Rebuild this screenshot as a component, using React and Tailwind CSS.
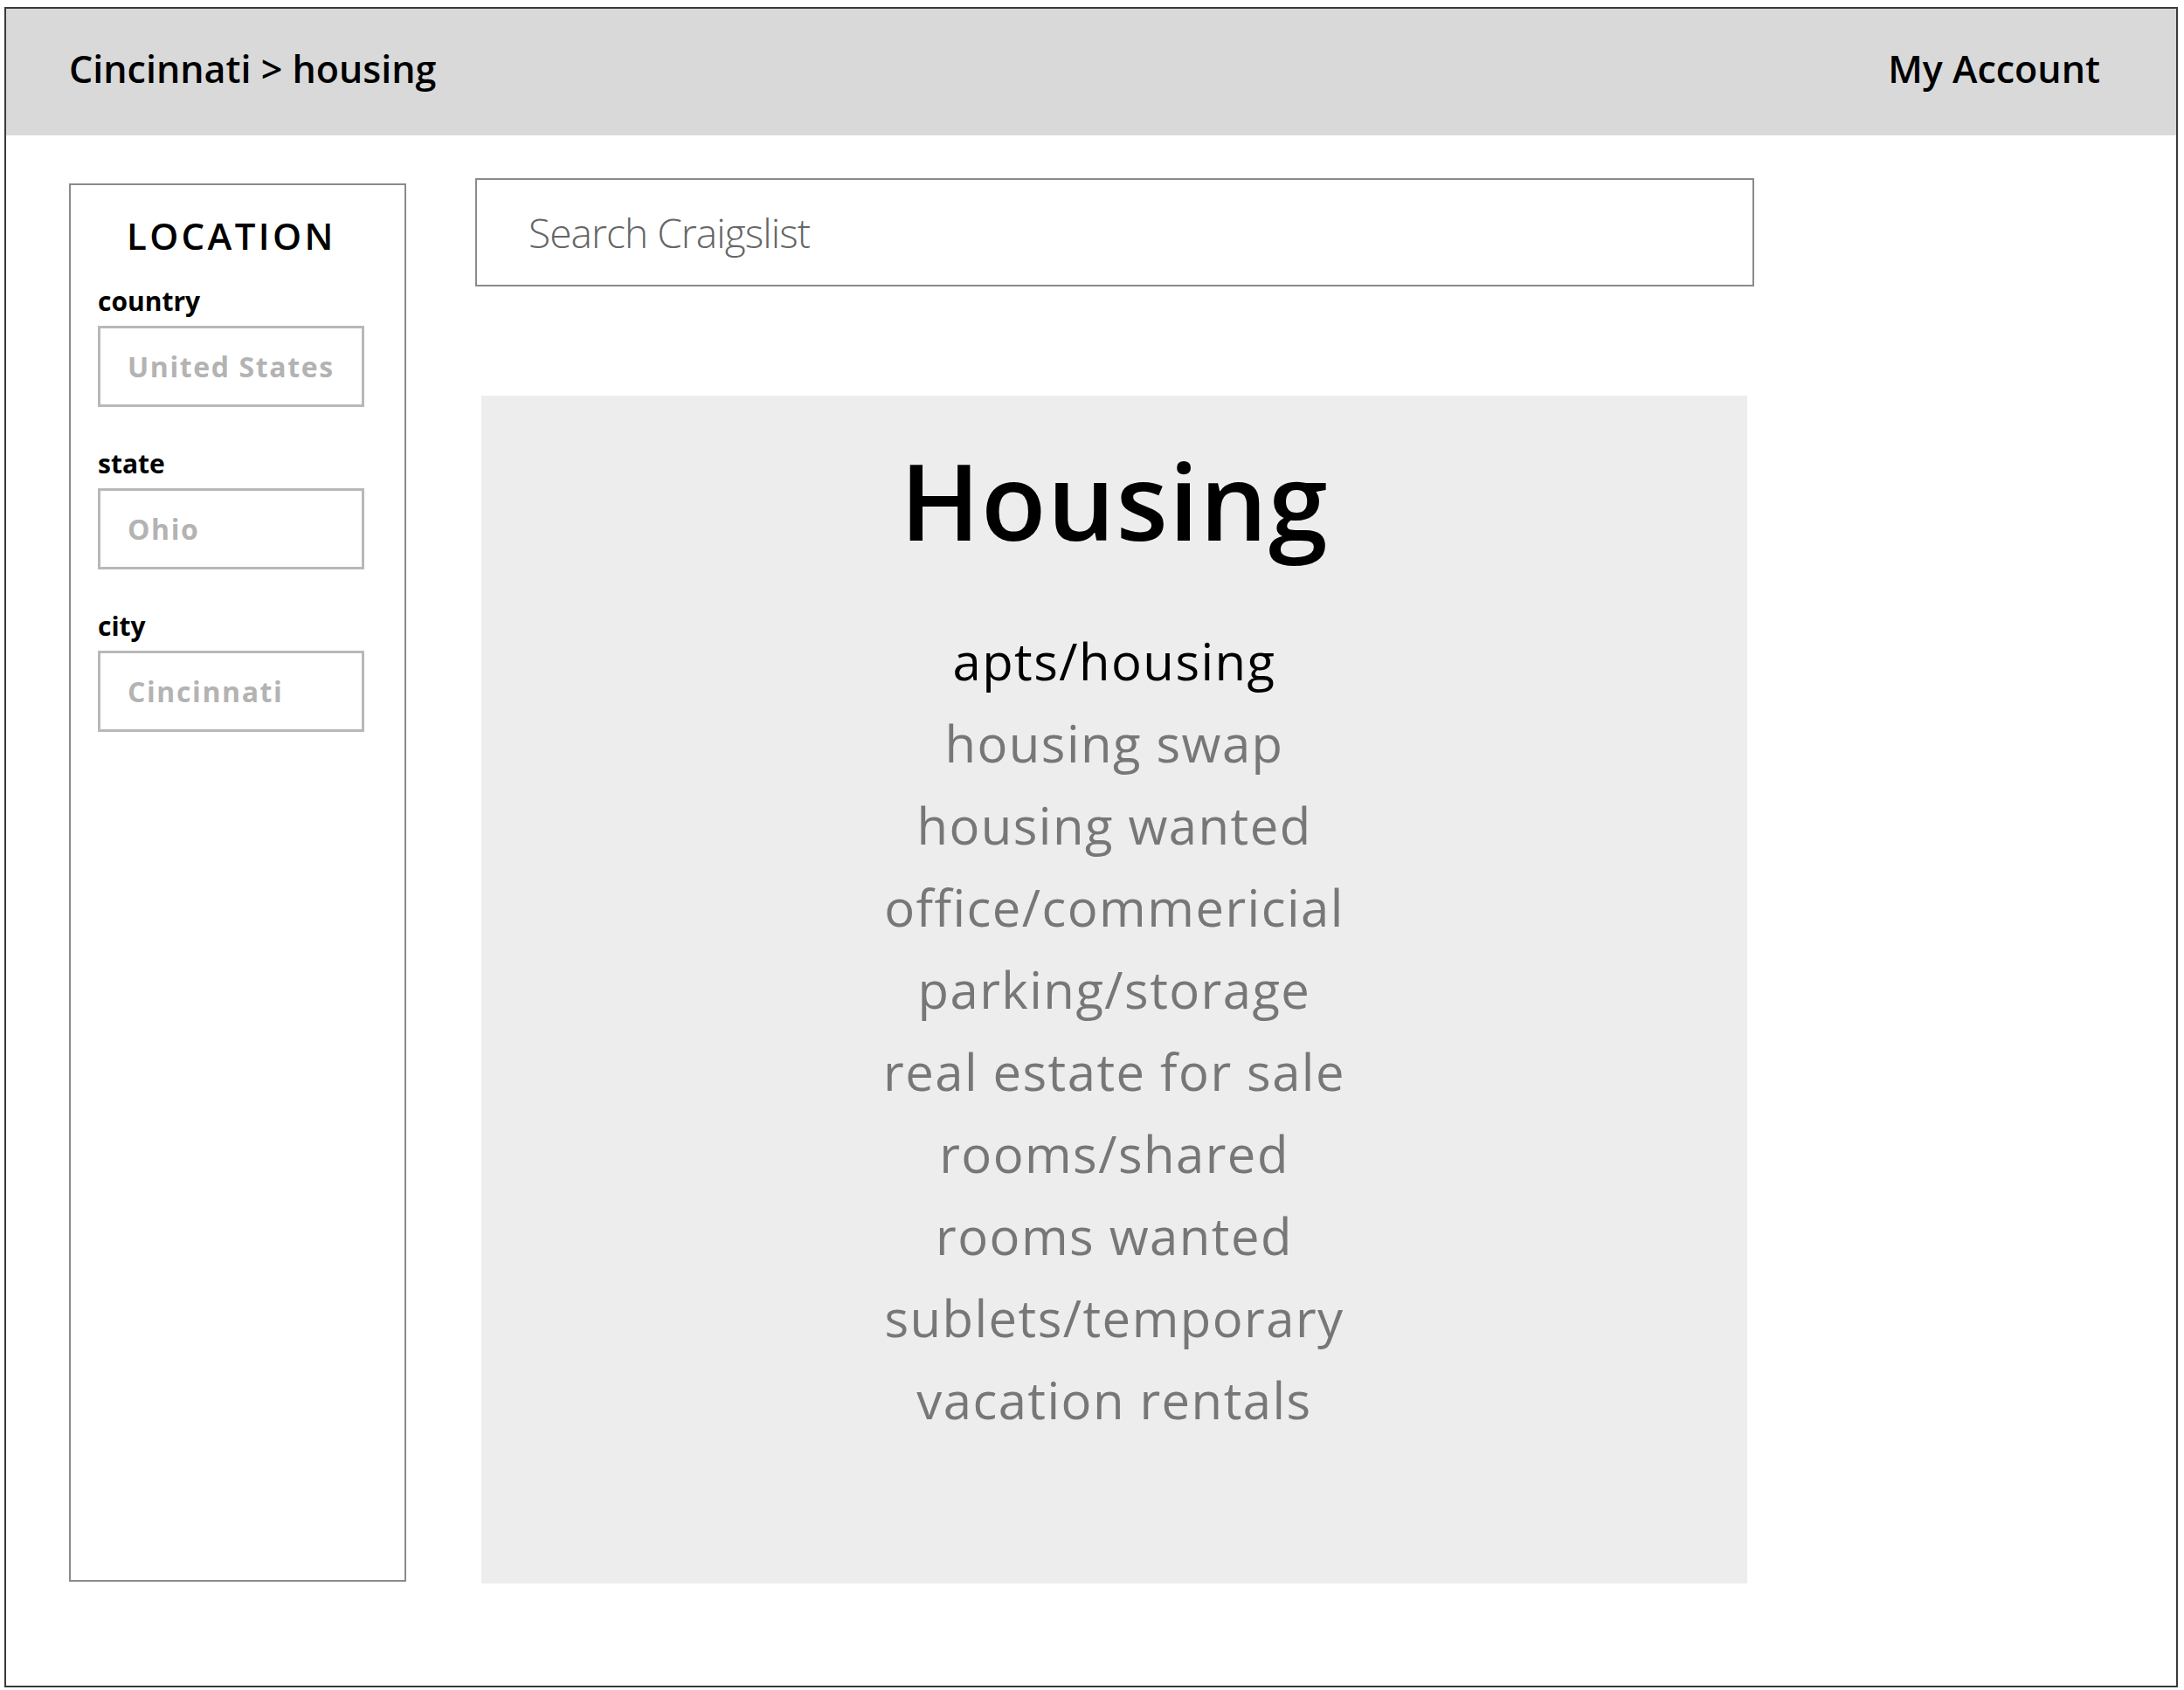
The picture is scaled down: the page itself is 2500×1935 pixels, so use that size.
import React from "react";

const font = { fontFamily: '"Open Sans", "Noto Sans", sans-serif' };

const listings = [
  "housing swap",
  "housing wanted",
  "office/commericial",
  "parking/storage",
  "real estate for sale",
  "rooms/shared",
  "rooms wanted",
  "sublets/temporary",
  "vacation rentals",
];

const Field = ({ label, value }) => {
  return (
    <div className="flex flex-col">
      <span className="text-[30px] leading-[36px] font-bold text-black">{label}</span>
      <div className="mt-[10px] w-[305px] h-[93px] border-[3px] border-[#b8b8b8] flex items-center pl-[31px]">
        <span className="text-[32px] font-bold tracking-[0.05em] text-[#b3b3b3]">{value}</span>
      </div>
    </div>
  );
};

const App = () => {
  return (
    <div className="w-[2500px] h-[1935px] bg-white pt-[8px] pl-[5px] pr-[7px] pb-[3px]" style={font}>
      <div className="w-full h-full border-2 border-[#3a3a3a] flex flex-col">
        <div className="h-[145px] bg-[#d9d9d9] flex items-center justify-between pl-[72px] pr-[87px] pb-[6px]">
          <span className="text-[43px] font-semibold text-black">Cincinnati &gt; housing</span>
          <span className="text-[43px] font-semibold text-black">My Account</span>
        </div>

        <div className="flex pl-[72px] pt-[49px]">
          <aside className="mt-[6px] w-[386px] h-[1601px] border-2 border-[#8a8a8a] pt-[34px] pl-[31px]">
            <h2 className="text-[42px] leading-[48px] font-semibold tracking-[0.08em] text-black pl-[33px]">LOCATION</h2>
            <div className="mt-[33px] flex flex-col gap-[47px]">
              <Field label="country" value="United States" />
              <Field label="state" value="Ohio" />
              <Field label="city" value="Cincinnati" />
            </div>
          </aside>

          <main className="ml-[79px] flex flex-col">
            <div className="w-[1464px] h-[124px] border-2 border-[#8a8a8a] flex items-center pl-[59px]">
              <span className="text-[46px] font-light text-[#666666] tracking-[-0.02em]">Search Craigslist</span>
            </div>

            <section className="ml-[7px] mt-[125px] w-[1449px] h-[1360px] bg-[#ededed] flex flex-col items-center pt-[46px]">
              <h1 className="text-[122px] leading-[146px] font-semibold text-black tracking-[0.01em]">Housing</h1>
              <ul className="mt-[65px] flex flex-col items-center">
                <li className="text-[58px] leading-[94px] text-black tracking-[0.025em]">apts/housing</li>
                {listings.map((item) => (
                  <li key={item} className="text-[58px] leading-[94px] text-[#777777] tracking-[0.025em]">
                    {item}
                  </li>
                ))}
              </ul>
            </section>
          </main>
        </div>
      </div>
    </div>
  );
};

export default App;
